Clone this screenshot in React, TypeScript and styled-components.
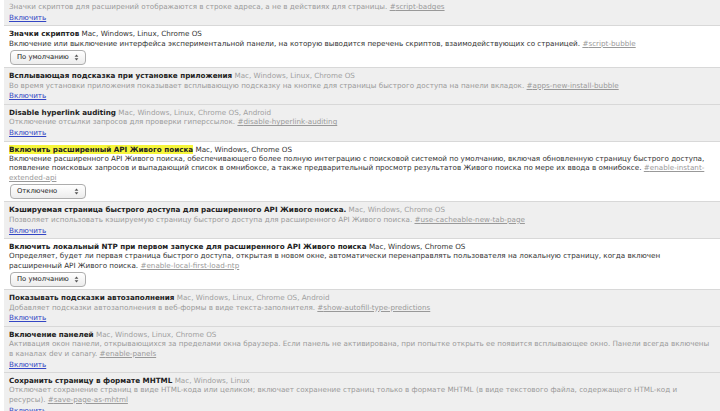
import React from 'react';
import styled, { createGlobalStyle } from 'styled-components';

type Flag = {
  name?: string;
  platforms?: string;
  description: string;
  hash: string;
  enabled: boolean;
  option?: string;
  highlight?: boolean;
};

const flags: Flag[] = [
  {
    description:
      'Значки скриптов для расширений отображаются в строке адреса, а не в действиях для страницы.',
    hash: 'script-badges',
    enabled: false,
  },
  {
    name: 'Значки скриптов',
    platforms: 'Mac, Windows, Linux, Chrome OS',
    description:
      'Включение или выключение интерфейса экспериментальной панели, на которую выводится перечень скриптов, взаимодействующих со страницей.',
    hash: 'script-bubble',
    enabled: true,
    option: 'По умолчанию',
  },
  {
    name: 'Всплывающая подсказка при установке приложения',
    platforms: 'Mac, Windows, Linux, Chrome OS',
    description:
      'Во время установки приложения показывает всплывающую подсказку на кнопке для страницы быстрого доступа на панели вкладок.',
    hash: 'apps-new-install-bubble',
    enabled: false,
  },
  {
    name: 'Disable hyperlink auditing',
    platforms: 'Mac, Windows, Linux, Chrome OS, Android',
    description: 'Отключение отсылки запросов для проверки гиперссылок.',
    hash: 'disable-hyperlink-auditing',
    enabled: false,
  },
  {
    name: 'Включить расширенный API Живого поиска',
    platforms: 'Mac, Windows, Chrome OS',
    description:
      'Включение расширенного API Живого поиска, обеспечивающего более полную интеграцию с поисковой системой по умолчанию, включая обновленную страницу быстрого доступа, появление поисковых запросов и выпадающий список в омнибоксе, а также предварительный просмотр результатов Живого поиска по мере их ввода в омнибоксе.',
    hash: 'enable-instant-extended-api',
    enabled: true,
    option: 'Отключено',
    highlight: true,
  },
  {
    name: 'Кэшируемая страница быстрого доступа для расширенного API Живого поиска.',
    platforms: 'Mac, Windows, Chrome OS',
    description:
      'Позволяет использовать кэшируемую страницу быстрого доступа для расширенного API Живого поиска.',
    hash: 'use-cacheable-new-tab-page',
    enabled: false,
  },
  {
    name: 'Включить локальный NTP при первом запуске для расширенного API Живого поиска',
    platforms: 'Mac, Windows, Chrome OS',
    description:
      'Определяет, будет ли первая страница быстрого доступа, открытая в новом окне, автоматически перенаправлять пользователя на локальную страницу, когда включен расширенный API Живого поиска.',
    hash: 'enable-local-first-load-ntp',
    enabled: true,
    option: 'По умолчанию',
  },
  {
    name: 'Показывать подсказки автозаполнения',
    platforms: 'Mac, Windows, Linux, Chrome OS, Android',
    description:
      'Добавляет подсказки автозаполнения в веб-формы в виде текста-заполнителя.',
    hash: 'show-autofill-type-predictions',
    enabled: false,
  },
  {
    name: 'Включение панелей',
    platforms: 'Mac, Windows, Linux, Chrome OS',
    description:
      'Активация окон панели, открывающихся за пределами окна браузера. Если панель не активирована, при попытке открыть ее появится всплывающее окно. Панели всегда включены в каналах dev и canary.',
    hash: 'enable-panels',
    enabled: false,
  },
  {
    name: 'Сохранить страницу в формате MHTML',
    platforms: 'Mac, Windows, Linux',
    description:
      'Отключает сохранение страниц в виде HTML-кода или целиком; включает сохранение страниц только в формате MHTML (в виде текстового файла, содержащего HTML-код и ресурсы).',
    hash: 'save-page-as-mhtml',
    enabled: false,
  },
];

const SelectArrows = () => (
  <svg width='5' height='7' viewBox='0 0 5 7'>
    <path d='M2.5 0.6 L4.4 2.8 L0.6 2.8 Z' fill='#555' />
    <path d='M2.5 6.4 L4.4 4.2 L0.6 4.2 Z' fill='#555' />
  </svg>
);

const App = () => {
  return (
    <>
      <GlobalStyle />
      <ExperimentList>
        {flags.map((flag) => (
          <Experiment key={flag.hash} $disabled={!flag.enabled}>
            {flag.name && (
              <div>
                <Name $highlight={flag.highlight}>{flag.name}</Name>{' '}
                <Platforms $disabled={!flag.enabled}>{flag.platforms}</Platforms>
              </div>
            )}
            <Description $disabled={!flag.enabled}>
              {flag.description} <HashLink href={`#${flag.hash}`}>#{flag.hash}</HashLink>
            </Description>
            {flag.enabled ? (
              <SelectBox>
                <span>{flag.option}</span>
                <SelectArrows />
              </SelectBox>
            ) : (
              <EnableLink href='#'>Включить</EnableLink>
            )}
          </Experiment>
        ))}
      </ExperimentList>
    </>
  );
};

const GlobalStyle = createGlobalStyle`
  body {
    margin: 0;
    background: #fff;
    font-family: 'DejaVu Sans', 'Liberation Sans', sans-serif;
    font-size: 7.2px;
    line-height: 9.4px;
  }
`;

const ExperimentList = styled.div`
  margin-left: 4px;
  overflow: hidden;
`;

const Experiment = styled.div<{ $disabled: boolean }>`
  background: ${({ $disabled }) => ($disabled ? '#efefef' : '#fff')};
  color: ${({ $disabled }) => ($disabled ? '#999' : '#333')};
  border-bottom: 1px solid #d8d8d8;
  box-shadow: 0 1px 0 #e9e9e9;
  padding: 3px 5px ${({ $disabled }) => ($disabled ? '3px' : '2px')} 5px;

  &:first-child {
    padding-top: 2px;
    padding-bottom: 3px;
  }
`;

const Name = styled.span<{ $highlight?: boolean }>`
  font-weight: bold;
  color: #222;
  background: ${({ $highlight }) => ($highlight ? '#f6f63b' : 'transparent')};
`;

const Platforms = styled.span<{ $disabled: boolean }>`
  color: ${({ $disabled }) => ($disabled ? '#a0a0a0' : '#333')};
`;

const Description = styled.div<{ $disabled: boolean }>`
  color: ${({ $disabled }) => ($disabled ? '#9a9a9a' : '#333')};
`;

const HashLink = styled.a`
  color: #999;
  text-decoration: underline;
`;

const EnableLink = styled.a`
  display: block;
  width: fit-content;
  margin-top: 1.5px;
  color: #3446c4;
  text-decoration: underline;
`;

const SelectBox = styled.div`
  display: flex;
  align-items: center;
  justify-content: space-between;
  box-sizing: border-box;
  width: 76px;
  height: 15px;
  margin: 2px 0 0 1px;
  padding: 0 6px 0 6px;
  border: 1px solid #adadad;
  border-radius: 4px;
  background: linear-gradient(#ffffff, #ececec);
  color: #222;
  font-size: 6.8px;
  white-space: nowrap;
`;

export default App;
